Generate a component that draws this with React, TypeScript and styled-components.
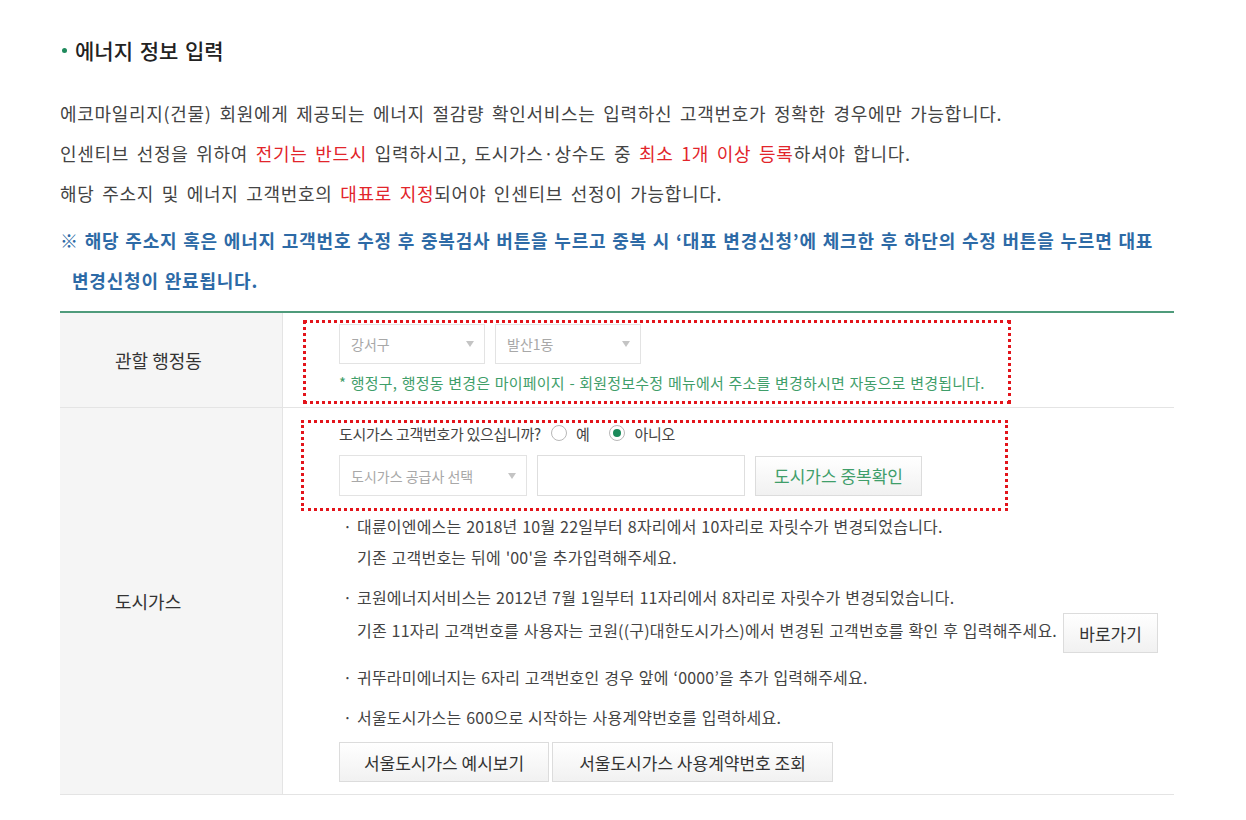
import React from "react";
import styled, { createGlobalStyle } from "styled-components";

const Global = createGlobalStyle`
  html, body { margin: 0; padding: 0; background: #fff; }
  body { font-family: "Noto Sans CJK KR", "Noto Sans", sans-serif; color: #444; }
  * { box-sizing: border-box; }
`;

const Page = styled.div`
  width: 1246px;
  padding: 30px 72px 24px 60px;
`;

const Title = styled.h2`
  margin: 0;
  display: flex;
  align-items: center;
  gap: 8px;
  font-size: 21px;
  font-weight: 500;
  color: #222;
  letter-spacing: 0;
  word-spacing: 2px;
  line-height: 40px;
  &::before {
    content: "";
    width: 5px;
    height: 5px;
    border-radius: 50%;
    background: #1f8a5c;
    margin-left: 2px;
  }
`;

const Intro = styled.div`
  margin-top: 23px;
  font-size: 18px;
  letter-spacing: 0.7px;
  word-spacing: 3px;
  line-height: 40px;
  color: #444;
  word-break: keep-all;
`;

const Line = styled.p`
  margin: 0;
`;

const Red = styled.span`
  color: #e2252b;
`;

const Notice = styled.p`
  margin: 7px 0 0;
  color: #2d6aa6;
  font-weight: 700;
  letter-spacing: 0.8px;
  word-spacing: 1px;
  padding-left: 12px;
  text-indent: -12px;
`;

const Table = styled.div`
  margin-top: 11px;
  border-top: 2px solid #4f9b7b;
  display: grid;
  grid-template-columns: 223px 1fr;
`;

const Label = styled.div`
  background: #f5f5f5;
  border-right: 1px solid #e4e4e4;
  border-bottom: 1px solid #e4e4e4;
  display: flex;
  align-items: center;
  padding-left: 55px;
  font-size: 18px;
  color: #333;
  letter-spacing: 0;
`;

const Cell = styled.div<{ $pad: string }>`
  border-bottom: 1px solid #e4e4e4;
  padding: ${(p) => p.$pad};
`;

const Dotted = styled.div<{ $w: number; $pad: string }>`
  width: ${(p) => p.$w}px;
  border: 3px dotted #e3141b;
  padding: ${(p) => p.$pad};
`;

const Row = styled.div`
  display: flex;
  gap: 10px;
  align-items: center;
`;

const Select = styled.div<{ $w: number; $h: number }>`
  width: ${(p) => p.$w}px;
  height: ${(p) => p.$h}px;
  border: 1px solid #e3e3e3;
  background: #fff;
  display: flex;
  align-items: center;
  justify-content: space-between;
  padding: 0 10px 0 11px;
  font-size: 14px;
  color: #a8a8a8;
  &::after {
    content: "";
    border-left: 4px solid transparent;
    border-right: 4px solid transparent;
    border-top: 6px solid #c4c4c4;
  }
`;

const GreenNote = styled.p`
  margin: 9px 0 0;
  font-size: 15px;
  color: #3f9e6a;
  letter-spacing: 0.2px;
  word-spacing: 1px;
  line-height: 20px;
  padding-bottom: 2px;
`;

const Question = styled.div`
  display: flex;
  align-items: center;
  font-size: 15px;
  color: #444;
  letter-spacing: -0.3px;
  height: 20px;
  margin-bottom: 12px;
`;

const Radio = styled.span<{ $on?: boolean }>`
  width: 16px;
  height: 16px;
  border-radius: 50%;
  border: 1px solid #b8b8b8;
  background: #fff;
  display: inline-flex;
  align-items: center;
  justify-content: center;
  margin: 0 9px 0 ${(p) => (p.$on ? 20 : 10)}px;
  &::after {
    content: "";
    width: 8px;
    height: 8px;
    border-radius: 50%;
    background: ${(p) => (p.$on ? "#1b8a5a" : "transparent")};
  }
`;

const Input = styled.div`
  width: 208px;
  height: 41px;
  border: 1px solid #dedede;
  background: #fff;
`;

const Button = styled.button<{ $w: number; $green?: boolean }>`
  width: ${(p) => p.$w}px;
  height: 40px;
  border: 1px solid #dcdcdc;
  background: linear-gradient(#ffffff, #f1f1f1);
  font-family: inherit;
  font-size: 17px;
  letter-spacing: 0;
  color: ${(p) => (p.$green ? "#3f9e6a" : "#333")};
  padding: 0;
  cursor: pointer;
`;

const Notes = styled.ul`
  list-style: none;
  margin: 0;
  padding: 0 0 0 38px;
  font-size: 16px;
  letter-spacing: 0.2px;
  word-spacing: 1px;
  color: #444;
  line-height: 31px;
`;

const Note = styled.li`
  margin-top: 9px;
  padding-left: 18px;
  &:first-child {
    margin-top: 0;
  }
`;

const Dot = styled.span`
  display: inline-block;
  width: 14px;
  margin-left: -14px;
`;

const InlineButton = styled(Button)`
  margin-left: 6px;
  vertical-align: middle;
`;

const ButtonRow = styled.div`
  display: flex;
  gap: 3px;
  margin: 9px 0 0 38px;
`;

export default function App() {
  return (
    <Page>
      <Global />
      <Title>에너지 정보 입력</Title>
      <Intro>
        <Line>에코마일리지(건물) 회원에게 제공되는 에너지 절감량 확인서비스는 입력하신 고객번호가 정확한 경우에만 가능합니다.</Line>
        <Line>
          인센티브 선정을 위하여 <Red>전기는 반드시</Red> 입력하시고, 도시가스·상수도 중 <Red>최소 1개 이상 등록</Red>하셔야 합니다.
        </Line>
        <Line>
          해당 주소지 및 에너지 고객번호의 <Red>대표로 지정</Red>되어야 인센티브 선정이 가능합니다.
        </Line>
        <Notice>
          ※ 해당 주소지 혹은 에너지 고객번호 수정 후 중복검사 버튼을 누르고 중복 시 ‘대표 변경신청’에 체크한 후 하단의 수정 버튼을 누르면 대표 변경신청이 완료됩니다.
        </Notice>
      </Intro>
      <Table>
        <Label>관할 행정동</Label>
        <Cell $pad="7px 0 3px 20px">
          <Dotted $w={708} $pad="1px 0 6px 33px">
            <Row>
              <Select $w={146} $h={40}>강서구</Select>
              <Select $w={146} $h={40}>발산1동</Select>
            </Row>
            <GreenNote>* 행정구, 행정동 변경은 마이페이지 - 회원정보수정 메뉴에서 주소를 변경하시면 자동으로 변경됩니다.</GreenNote>
          </Dotted>
        </Cell>
        <Label>도시가스</Label>
        <Cell $pad="12px 0 12px 18px">
          <Dotted $w={707} $pad="0 0 12px 35px">
            <Question>
              도시가스 고객번호가 있으십니까?
              <Radio />예
              <Radio $on />아니오
            </Question>
            <Row>
              <Select $w={188} $h={41}>도시가스 공급사 선택</Select>
              <Input />
              <Button $w={167} $green>도시가스 중복확인</Button>
            </Row>
          </Dotted>
          <Notes>
            <Note>
              <Dot>·</Dot>대륜이엔에스는 2018년 10월 22일부터 8자리에서 10자리로 자릿수가 변경되었습니다.
              <br />
              기존 고객번호는 뒤에 '00'을 추가입력해주세요.
            </Note>
            <Note>
              <Dot>·</Dot>코원에너지서비스는 2012년 7월 1일부터 11자리에서 8자리로 자릿수가 변경되었습니다.
              <br />
              기존 11자리 고객번호를 사용자는 코원((구)대한도시가스)에서 변경된 고객번호를 확인 후 입력해주세요.
              <InlineButton $w={95}>바로가기</InlineButton>
            </Note>
            <Note>
              <Dot>·</Dot>귀뚜라미에너지는 6자리 고객번호인 경우 앞에 ‘0000’을 추가 입력해주세요.
            </Note>
            <Note>
              <Dot>·</Dot>서울도시가스는 600으로 시작하는 사용계약번호를 입력하세요.
            </Note>
          </Notes>
          <ButtonRow>
            <Button $w={210}>서울도시가스 예시보기</Button>
            <Button $w={281}>서울도시가스 사용계약번호 조회</Button>
          </ButtonRow>
        </Cell>
      </Table>
    </Page>
  );
}
